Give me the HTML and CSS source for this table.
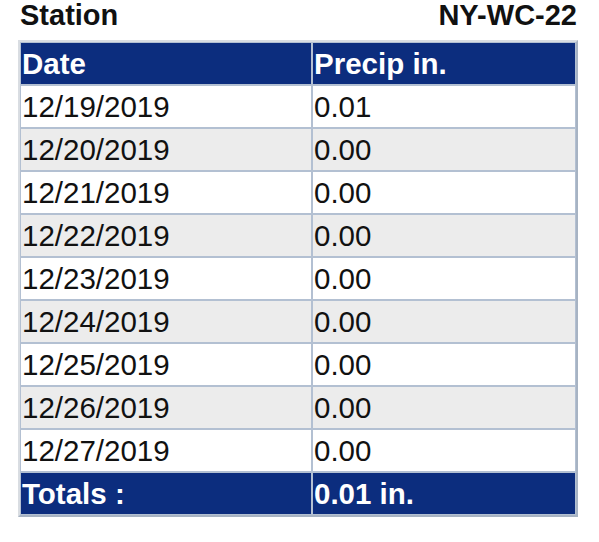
FILE: index.html
```html
<!DOCTYPE html>
<html>
<head>
<meta charset="utf-8">
<link rel="stylesheet" href="styles.css">
</head>
<body>
<div class="wrap">
  <div class="title">
    <span>Station</span>
    <span>NY-WC-22</span>
  </div>
  <table class="precip">
    <thead>
      <tr><th class="c1">Date</th><th class="c2">Precip in.</th></tr>
    </thead>
    <tbody>
      <tr><td>12/19/2019</td><td>0.01</td></tr>
      <tr><td>12/20/2019</td><td>0.00</td></tr>
      <tr><td>12/21/2019</td><td>0.00</td></tr>
      <tr><td>12/22/2019</td><td>0.00</td></tr>
      <tr><td>12/23/2019</td><td>0.00</td></tr>
      <tr><td>12/24/2019</td><td>0.00</td></tr>
      <tr><td>12/25/2019</td><td>0.00</td></tr>
      <tr><td>12/26/2019</td><td>0.00</td></tr>
      <tr><td>12/27/2019</td><td>0.00</td></tr>
    </tbody>
    <tfoot>
      <tr><th>Totals :</th><th>0.01 in.</th></tr>
    </tfoot>
  </table>
</div>
</body>
</html>
```

FILE: styles.css
```css
html, body {
  margin: 0;
  padding: 0;
  background: #ffffff;
}
body {
  font-family: "Liberation Sans", Arial, sans-serif;
  color: #111111;
}
.wrap {
  width: 560px;
  margin-left: 18px;
  padding-top: 1px;
}
.title {
  display: flex;
  justify-content: space-between;
  padding: 0 1px 0 2px;
  font-size: 29px;
  font-weight: bold;
  line-height: 29px;
}
.precip {
  margin-top: 10px;
  width: 560px;
  border-collapse: separate;
  border-spacing: 0;
  border-style: solid;
  border-width: 2px 2px 2px 2px;
  border-color: #d9dde2 #a7b3c3 #a7b3c3 #d9dde2;
  font-size: 29.5px;
  line-height: 40px;
  table-layout: fixed;
}
.precip th,
.precip td {
  border: 1px solid #b3c0d2;
  padding: 1px 0 0 1px;
  height: 40px;
  box-sizing: border-box;
  text-align: left;
  white-space: nowrap;
}
.precip tr {
  height: 43px;
}
.precip .c1 {
  width: 292px;
}
.precip th {
  background: #0c2d7e;
  color: #ffffff;
  font-weight: bold;
}
.precip tbody td {
  background: #ffffff;
  font-weight: normal;
}
.precip tbody tr:nth-child(even) td {
  background: #ececec;
}
```
